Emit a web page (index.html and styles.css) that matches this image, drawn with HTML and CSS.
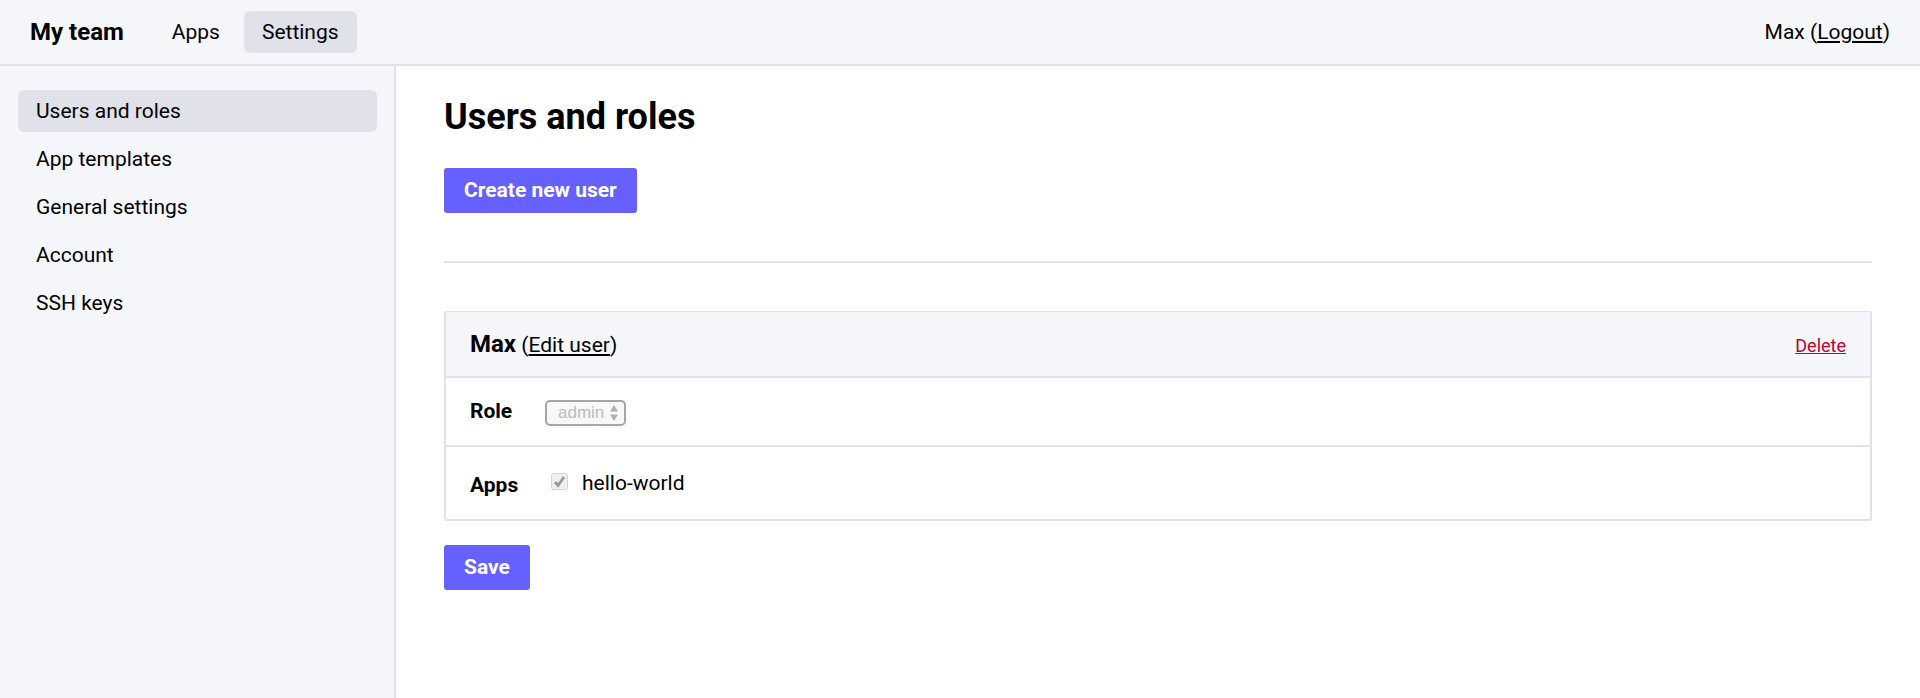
FILE: index.html
```
<!DOCTYPE html>
<html lang="en">
<head>
<meta charset="utf-8">
<title>Users and roles</title>
<link rel="stylesheet" href="styles.css">
</head>
<body>
<header class="topbar">
  <strong class="team">My team</strong>
  <nav class="topnav">
    <a class="nav-item" href="#apps">Apps</a>
    <a class="nav-item active" href="#settings">Settings</a>
  </nav>
  <div class="session">Max (<a class="link" href="#logout">Logout</a>)</div>
</header>
<div class="layout">
  <nav class="sidebar">
    <a class="nav-item active" href="#users">Users and roles</a>
    <a class="nav-item" href="#templates">App templates</a>
    <a class="nav-item" href="#general">General settings</a>
    <a class="nav-item" href="#account">Account</a>
    <a class="nav-item" href="#ssh">SSH keys</a>
  </nav>
  <main class="content">
    <h1 class="title">Users and roles</h1>
    <button class="button" type="button">Create new user</button>
    <hr class="divider">
    <form>
      <section class="card">
        <div class="card-head">
          <div><strong class="user">Max</strong> (<a class="link" href="#edit">Edit user</a>)</div>
          <a class="link delete" href="#delete">Delete</a>
        </div>
        <div class="row row-role">
          <label class="row-label" for="role">Role</label>
          <div class="select-box">
            <select class="select" id="role" disabled><option>admin</option></select>
            <svg class="arrows" width="8" height="16" viewBox="0 0 8 16" aria-hidden="true"><path d="M4 0L8 6.500H0ZM0 9.500H8L4 16Z" fill="#b0b0b0"/></svg>
          </div>
        </div>
        <div class="row row-apps">
          <span class="row-label">Apps</span>
          <label class="check" for="hello"><input class="checkbox" id="hello" type="checkbox" checked disabled>hello-world</label>
        </div>
      </section>
      <button class="button" type="button">Save</button>
    </form>
  </main>
</div>
</body>
</html>
```
FILE: styles.css
```
* { box-sizing: border-box; }
body {
  margin: 0;
  min-height: 100vh;
  display: flex;
  flex-direction: column;
  font: 21px/24px Roboto, sans-serif;
  color: #000;
  background: #fff;
}
.topbar {
  display: flex;
  align-items: center;
  padding: 11px 30px;
  background: #f5f6fa;
  border-bottom: 2px solid #e1e1e9;
}
.team { font-size: 24px; }
.topnav { display: flex; gap: 6px; margin-left: 30px; }
.session { margin-left: auto; }
.nav-item {
  padding: 9px 18px;
  border-radius: 6px;
  color: inherit;
  text-decoration: none;
}
.active { background: #e1e1e9; }
.link { color: inherit; text-decoration: underline; }
.layout { flex: 1; display: flex; }
.sidebar {
  flex: 0 0 396px;
  display: flex;
  flex-direction: column;
  gap: 6px;
  padding: 24px 17px 24px 18px;
  background: #f5f6fa;
  border-right: 2px solid #e1e1e9;
}
.content { flex: 1; padding: 30px 48px; }
.title { margin: 0 0 30px; font-size: 36px; line-height: 42px; }
.button {
  display: block;
  padding: 10px 20px 11px;
  border: 0;
  border-radius: 3px;
  background: #6660ff;
  color: #fff;
  font: bold 21px/24px Roboto, sans-serif;
}
.divider { margin: 48px 0; border: 0; border-top: 2px solid #e1e1e9; }
.card {
  margin-bottom: 24px;
  border: 2px solid #e1e1e9;
  border-top-width: 1px;
  border-radius: 3px;
}
.card-head {
  display: flex;
  justify-content: space-between;
  align-items: baseline;
  min-height: 64px;
  padding: 20px 24px 18px;
  background: #f5f6fa;
}
.user { font-size: 24px; }
.delete { color: #c00028; font-size: 18px; }
.row {
  display: flex;
  align-items: center;
  min-height: 69px;
  padding: 0 24px;
  border-top: 2px solid #e1e1e9;
}
.row-role { padding-bottom: 2px; }
.row-apps { min-height: 74px; padding-top: 4px; }
.row-label { width: 75px; font-weight: bold; }
.select-box { position: relative; display: flex; margin-top: 4px; }
.select {
  appearance: none;
  width: 81px;
  height: 26px;
  padding: 0 0 0 11px;
  border: 2px solid #a6a6a6;
  border-radius: 5px;
  background: #f8f8f8;
  color: #bcbcbc;
  opacity: 1;
  font: 17px/20px "Liberation Sans", sans-serif;
}
.arrows { position: absolute; right: 8px; top: 5px; }
.check { display: flex; align-items: center; gap: 14px; padding: 0 6px 4px; }
.checkbox {
  appearance: none;
  width: 17px;
  height: 17px;
  margin: 0 0 4px;
  border: 1px solid #d2d2d2;
  border-radius: 3px;
  background: #f0f0f0 url("data:image/svg+xml,%3Csvg xmlns='http://www.w3.org/2000/svg' viewBox='0 0 15 15'%3E%3Cpath d='M3 8L6 11.500L12 3' fill='none' stroke='%23999' stroke-width='2.800'/%3E%3C/svg%3E") center / 15px no-repeat;
}
```
